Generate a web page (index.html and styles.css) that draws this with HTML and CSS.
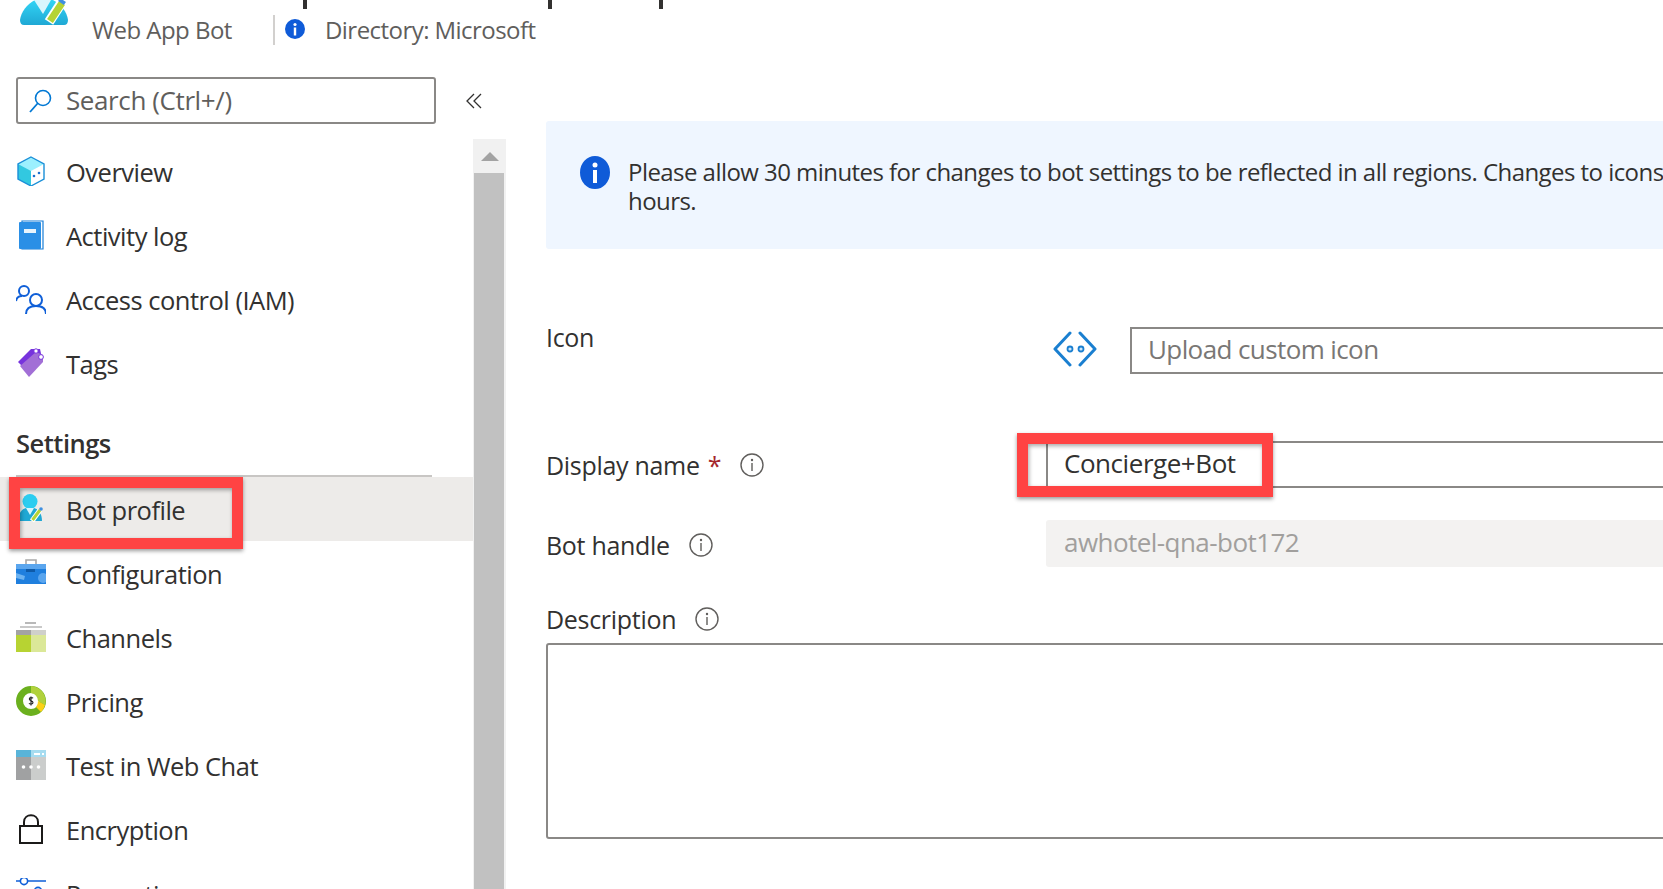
FILE: index.html
```html
<!DOCTYPE html>
<html lang="en">
<head>
	<meta charset="UTF-8">
	<title>Bot profile</title>
	<link rel="stylesheet" href="styles.css">
</head>
<body>
	<header class="top">
		<svg class="logo" viewBox="0 0 50 26">
			<defs>
				<linearGradient id="teal" x1="0" y1="0" x2="0" y2="1"><stop offset="0" stop-color="#32d4f5"/><stop offset="1" stop-color="#1fa8d4"/></linearGradient>
			</defs>
			<path d="M16 0C8 4 2 12 1 20Q1 25 5 25H45Q49 25 49 20C48 12 42 4 34 0Z" fill="url(#teal)"/>
			<path d="M15 0L24 14L32 0Z" fill="#d8f6fd"/>
			<path d="M30 22L43 2" stroke="#fff" stroke-width="10"/>
			<path d="M31 21L43 3" stroke="#b4d334" stroke-width="7"/>
			<path d="M42 3L44 0" stroke="#3f8fe0" stroke-width="7"/>
		</svg>
		<div class="top-text">
			<div class="cut-title"><i></i><i></i><i></i></div>
			<div class="subtitle">
				<span class="kind">Web App Bot</span>
				<span class="sep"></span>
				<svg class="info-solid-sm" viewBox="0 0 20 20"><circle cx="10" cy="10" r="10" fill="#0f5bd8"/><circle cx="10" cy="5.5" r="1.6" fill="#fff"/><rect x="8.8" y="8.5" width="2.4" height="8" fill="#fff"/></svg>
				<span class="dir">Directory: Microsoft</span>
			</div>
		</div>
	</header>

	<div class="page">
		<aside class="side">
			<div class="search-row">
				<div class="search">
					<svg viewBox="0 0 24 24" class="search-icon"><circle cx="15" cy="9" r="7.5" fill="none" stroke="#0078d4" stroke-width="1.6"/><path d="M10 14L2 23" stroke="#0078d4" stroke-width="1.8"/></svg>
					<span>Search (Ctrl+/)</span>
				</div>
				<svg viewBox="0 0 16 16" class="collapse"><path d="M8 1L1 8L8 15M15 1L8 8L15 15" fill="none" stroke="#323130" stroke-width="1.3"/></svg>
			</div>
			<div class="side-body">
				<nav class="nav">
					<a class="item">
						<svg viewBox="0 0 30 30"><path d="M15 1L28 8V23L15 30L2 23V8Z" fill="#9cf0fe"/><path d="M2 8L15 15V30L2 23Z" fill="#32c8e0"/><path d="M15 15L28 8V23L15 30Z" fill="#fff"/><path d="M15 1L28 8V23L15 30L2 23V8Z" fill="none" stroke="#1a8fd8" stroke-width="1.4"/><circle cx="18" cy="20" r="1.3" fill="#1a6fd0"/><circle cx="23" cy="17" r="1.3" fill="#1a6fd0"/></svg>
						<span>Overview</span>
					</a>
					<a class="item">
						<svg viewBox="0 0 30 30"><path d="M6 1H27V29H6Z" fill="none" stroke="#1a7fd8" stroke-width="1.2"/><rect x="3" y="2" width="22" height="27" rx="1" fill="#2a8fe6"/><rect x="8" y="9" width="12" height="4" fill="#e8f4fc"/></svg>
						<span>Activity log</span>
					</a>
					<a class="item">
						<svg viewBox="0 0 30 30" fill="none" stroke="#0f5fd8" stroke-width="2"><circle cx="8" cy="7" r="5"/><path d="M0 17C1 12 5 12 6 12"/><circle cx="20" cy="16" r="6"/><path d="M10 30C10 24 14 22 20 22S30 24 30 30"/></svg>
						<span>Access control (IAM)</span>
					</a>
					<a class="item">
						<svg viewBox="0 0 30 30"><path d="M2 14L15 1H24L26 10L12 24Z" fill="#7733dd"/><path d="M4 18L20 4L27 7V14L13 29Z" fill="#a26fd6"/><circle cx="20" cy="3" r="2.2" fill="#fff" stroke="#7733dd"/><circle cx="25" cy="9" r="2.4" fill="#fff" stroke="#7733dd"/></svg>
						<span>Tags</span>
					</a>
					<h3 class="group">Settings</h3>
					<a class="item active">
						<svg viewBox="0 0 30 30"><circle cx="14" cy="7.500" r="7.500" fill="#2ccdf0"/><path d="M2 27C2 19 6 15 10 14H18C22 15 26 19 26 27Z" fill="#1fa8d4"/><path d="M10 14H18L14 21Z" fill="#d8f6fd"/><path d="M16 27L24 16" stroke="#fff" stroke-width="5"/><path d="M16.500 26L24 16" stroke="#b4d334" stroke-width="3"/><circle cx="25" cy="15" r="1.800" fill="#3f8fe0"/></svg>
						<span>Bot profile</span>
						<div class="mark nav-mark"></div>
					</a>
					<a class="item">
						<svg viewBox="0 0 30 30"><path d="M10 7V2H20V7" fill="none" stroke="#a8a8a8" stroke-width="1.6"/><rect x="0" y="6" width="30" height="20" fill="#5ba6ee"/><rect x="0" y="11" width="30" height="15" fill="#1f7fde"/><rect x="10" y="11" width="9" height="3" fill="#0e5aa8"/><path d="M0 15L9 18L8 22L0 20Z" fill="#6cb2f0"/><circle cx="27" cy="20" r="5" fill="#5ba6ee"/></svg>
						<span>Configuration</span>
					</a>
					<a class="item">
						<svg viewBox="0 0 30 30"><rect x="9" y="0" width="11" height="2" fill="#b9b9b9"/><rect x="4" y="4" width="22" height="2" fill="#c9c9c9"/><rect x="0" y="8" width="15" height="5" fill="#a3a3a3"/><rect x="15" y="8" width="15" height="5" fill="#cfd0cb"/><rect x="0" y="13" width="15" height="17" fill="#b7d332"/><rect x="15" y="13" width="15" height="17" fill="#dbe898"/></svg>
						<span>Channels</span>
					</a>
					<a class="item">
						<svg viewBox="0 0 30 30"><circle cx="15" cy="15" r="11.5" fill="#fff" stroke="#6bb01e" stroke-width="7"/><path d="M15 0A15 15 0 0 1 29 19L22 15A8 8 0 0 0 15 7Z" fill="#b1d13c"/><path d="M29 19A15 15 0 0 1 25 26L20 21A8 8 0 0 0 22 15Z" fill="#fcd116"/><path d="M17 12.300C16.500 11.300 13.300 11.300 13.300 13C13.300 15 17 14.300 17 16.500C17 18.300 13.800 18.500 13 17.300M15 10.500V19.500" fill="none" stroke="#222" stroke-width="1.100"/></svg>
						<span>Pricing</span>
					</a>
					<a class="item">
						<svg viewBox="0 0 30 30"><rect width="15" height="7" fill="#59b4d9"/><rect x="15" width="15" height="7" fill="#a6dcf0"/><rect x="18" y="3" width="6" height="2" fill="#fff"/><rect x="26" y="3" width="2" height="2" fill="#fff"/><rect y="7" width="15" height="23" fill="#a0a1a2"/><rect x="15" y="7" width="15" height="23" fill="#cbcdcc"/><circle cx="7.500" cy="17" r="1.800" fill="#fff"/><circle cx="15" cy="17" r="1.800" fill="#fff"/><circle cx="22.500" cy="17" r="1.800" fill="#fff"/></svg>
						<span>Test in Web Chat</span>
					</a>
					<a class="item">
						<svg viewBox="0 0 30 30" fill="none" stroke="#1b1a19" stroke-width="2"><rect x="4" y="12" width="22" height="17"/><path d="M8 12V8C8 -1 22 -1 22 8V12"/></svg>
						<span>Encryption</span>
					</a>
					<a class="item">
						<svg viewBox="0 0 30 30" fill="none" stroke="#0f5fd8" stroke-width="1.600"><path d="M0 3H4M12 3H30M0 13H18M26 13H30"/><circle cx="8" cy="3" r="3.600"/><circle cx="22" cy="13" r="3.600"/></svg>
						<span>Properties</span>
					</a>
				</nav>
				<div class="scrollbar">
					<div class="scroll-btn"><b></b></div>
					<div class="scroll-thumb"></div>
				</div>
			</div>
		</aside>

		<main class="main">
			<div class="content">
				<div class="banner">
					<svg class="info-solid" viewBox="0 0 30 33"><ellipse cx="15" cy="16.500" rx="15" ry="16.500" fill="#0f5bd8"/><circle cx="15" cy="9" r="2.500" fill="#fff"/><rect x="13" y="14" width="4" height="13" fill="#fff"/></svg>
					<p>Please allow 30 minutes for changes to bot settings to be reflected in all regions. Changes to icons<br>hours.</p>
				</div>

				<div class="row row-icon">
					<label class="label label-icon">Icon</label>
					<svg class="bot-icon" viewBox="0 0 44 40"><path d="M17 4L2 20L17 36M27 4L42 20L27 36" fill="none" stroke="#1a7fd0" stroke-width="3" stroke-linecap="round" stroke-linejoin="round"/><circle cx="17" cy="20" r="2.500" fill="#cfe6f7" stroke="#1a7fd0" stroke-width="1.800"/><circle cx="28" cy="20" r="2.500" fill="#cfe6f7" stroke="#1a7fd0" stroke-width="1.800"/></svg>
					<div class="input upload">Upload custom icon</div>
				</div>

				<div class="row row-name">
					<label class="label label-name">Display name <em>*</em>
						<svg class="info" viewBox="0 0 24 24"><circle cx="12" cy="12" r="11" fill="none" stroke="#605e5c" stroke-width="1.400"/><circle cx="12" cy="7" r="1.200" fill="#605e5c"/><rect x="11.300" y="10" width="1.400" height="8" fill="#605e5c"/></svg>
					</label>
					<div class="input name">Concierge+Bot
						<div class="mark field-mark"></div>
					</div>
				</div>

				<div class="row row-handle">
					<label class="label label-handle">Bot handle
						<svg class="info" viewBox="0 0 24 24"><circle cx="12" cy="12" r="11" fill="none" stroke="#605e5c" stroke-width="1.400"/><circle cx="12" cy="7" r="1.200" fill="#605e5c"/><rect x="11.300" y="10" width="1.400" height="8" fill="#605e5c"/></svg>
					</label>
					<div class="input handle">awhotel-qna-bot172</div>
				</div>

				<label class="label label-desc">Description
					<svg class="info" viewBox="0 0 24 24"><circle cx="12" cy="12" r="11" fill="none" stroke="#605e5c" stroke-width="1.400"/><circle cx="12" cy="7" r="1.200" fill="#605e5c"/><rect x="11.300" y="10" width="1.400" height="8" fill="#605e5c"/></svg>
				</label>
				<div class="textarea"></div>
			</div>
		</main>
	</div>
</body>
</html>
```

FILE: styles.css
```css
html,body{margin:0;padding:0;height:889px;overflow:hidden;background:#fff}
body{font:24px/34px "Open Sans","Noto Sans",sans-serif;color:#323130;letter-spacing:-.55px}
p,h3{margin:0}
svg{display:block;flex:none}

.top{display:flex;height:48px;padding-left:19px}
.logo{width:50px;height:26px}
.top-text{margin-left:23px}
.cut-title{height:9px;margin-bottom:4px;padding-left:211px;display:flex}
.cut-title i{width:4px;height:9px;background:#323130}
.cut-title i:nth-child(2){margin-left:241px}
.cut-title i:nth-child(3){margin-left:107px}
.subtitle{display:flex;align-items:center;color:#605e5c}
.kind{width:181px}
.sep{width:2px;height:30px;background:#d2d0ce}
.info-solid-sm{width:20px;height:20px;margin:-3px 20px 0 10px}

.page{display:flex;height:841px}
.side{width:506px;flex:none}
.search-row{display:flex;align-items:center;margin-top:29px;padding-left:16px}
.search{width:420px;height:47px;box-sizing:border-box;border:2px solid #8a8886;border-radius:3px;display:flex;align-items:center;color:#605e5c;font-size:26px;letter-spacing:-.4px;padding-bottom:2px}
.search-icon{width:24px;height:24px;margin:2px 14px 0 10px}
.collapse{width:16px;height:16px;margin-left:30px}
.side-body{display:flex;margin-top:15px}
.nav{width:473px;padding-top:2px;flex:none;font-size:25.5px;letter-spacing:-.5px}
.item{display:flex;align-items:center;height:64px;padding-left:16px;position:relative}
.item svg{width:30px;height:30px;margin:0 20px 5px 0}
.item span{padding-bottom:2px}
.group ~ .item svg{margin-bottom:0}
.group ~ .item span{padding:2px 0 0}
.item.active{background:#edebe9}
.group{font-size:25.5px;font-weight:600;line-height:36px;margin:28px 41px 0 16px;padding-bottom:14px;border-bottom:2px solid #c8c6c4}

.mark{position:absolute;box-sizing:border-box;border:11px solid #ff4343;box-shadow:0 2px 4px rgba(0,0,0,.4),inset 1px 2px 4px rgba(0,0,0,.35)}
.nav-mark{left:9px;top:0;width:234px;height:72px}

.scrollbar{width:33px;background:#f1f1f1;margin-top:0;height:760px;flex:none}
.scroll-btn{height:34px;display:flex;justify-content:center;align-items:center}
.scroll-btn b{border:9px solid transparent;border-top:0;border-bottom-color:#a3a3a3}
.scroll-thumb{height:726px;margin-left:1px;width:30px;background:#c1c1c1}

.main{flex:1;overflow:hidden;padding-left:40px;min-width:0}
.content{width:1400px;font-size:25px;letter-spacing:-.3px}
.banner{height:128px;margin-top:73px;box-sizing:border-box;background:#eff6ff;border-radius:3px;display:flex;padding:35px 0 0 34px;font-size:24px;letter-spacing:-.55px;line-height:29px}
.info-solid{width:30px;height:33px;margin-right:18px}
.banner p{white-space:nowrap;padding-top:1px}

.row{display:flex;align-items:flex-start}
.label{display:flex;align-items:center;width:500px;flex:none}
.label em{color:#a4262c;font-style:normal;margin:0 0 0 8px}
.info{width:24px;height:24px;margin-left:19px}
.input{height:47px;box-sizing:border-box;border:2px solid #8a8886;border-right:0;flex:1;padding:0 0 3px 16px;display:flex;align-items:center;position:relative;font-size:26px;letter-spacing:-.45px}

.row-icon{margin-top:78px}
.label-icon{margin-top:-7px}
.bot-icon{width:44px;height:40px;margin:2px 33px 0 7px}
.upload{color:#797775;letter-spacing:-.6px}

.row-name{margin-top:67px}
.label-name{margin-top:7px}
.field-mark{left:-31px;top:-10px;width:256px;height:64px}

.row-handle{margin-top:32px}
.label-handle{margin-top:8px}
.handle{background:#f3f2f1;border:0;border-radius:3px;color:#a19f9d;padding-left:18px;letter-spacing:-.55px}

.label-desc{margin-top:35px;width:auto}
.textarea{height:196px;margin-top:7px;box-sizing:border-box;border:2px solid #8a8886;border-radius:3px;width:1300px}
```
